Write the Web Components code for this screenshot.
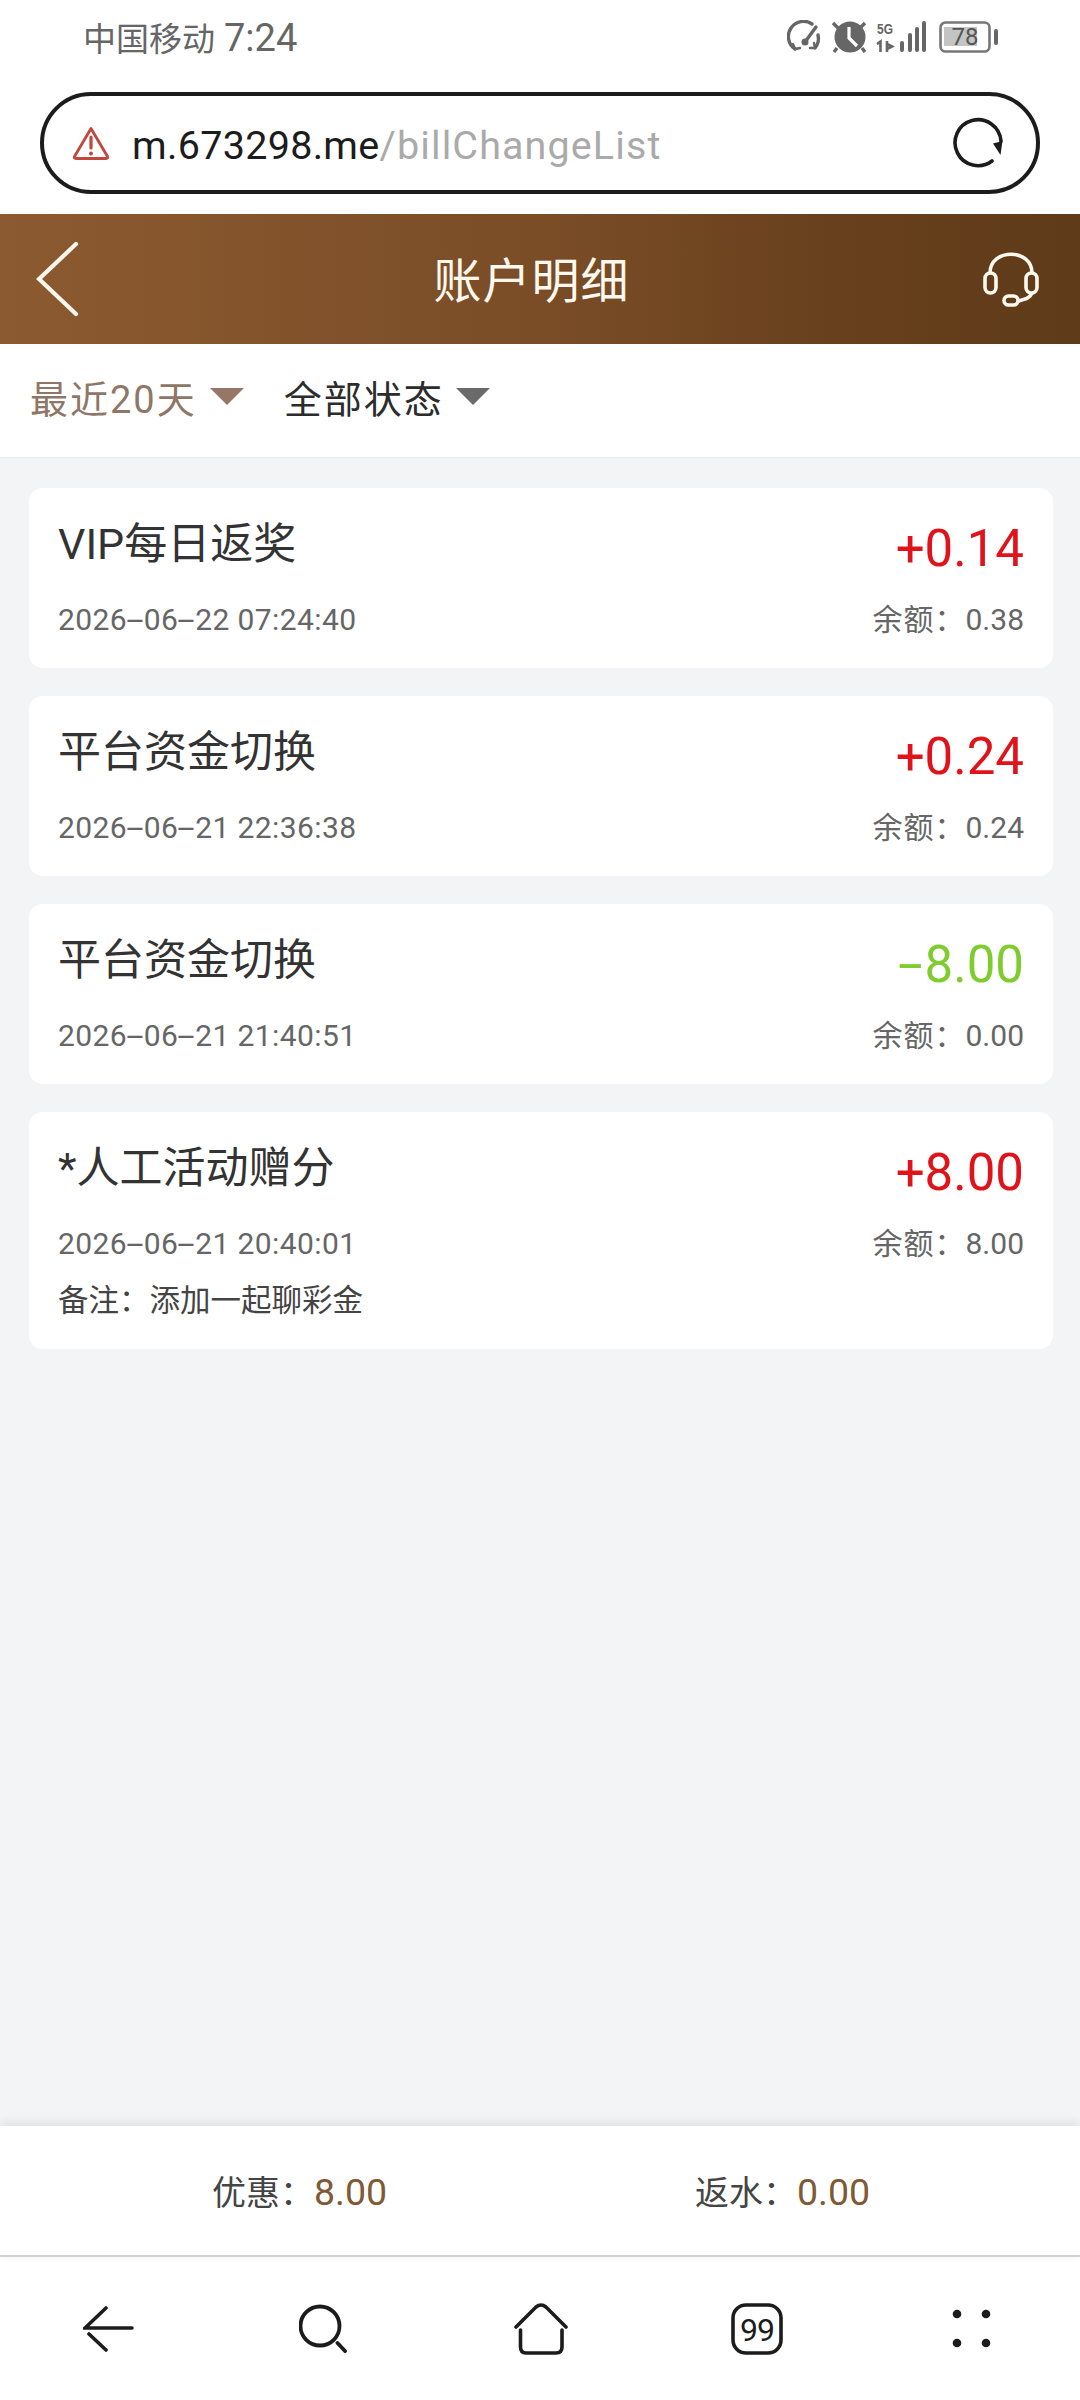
<!DOCTYPE html>
<html lang="zh">
<head>
<meta charset="utf-8">
<title>账户明细</title>
<style>
html, body {
  margin: 0;
  height: 2400px;
  overflow: hidden;
  background: #f3f4f6;
  font-family: Roboto, "Noto Sans CJK SC", sans-serif;
}
#app {
  display: flex;
  flex-direction: column;
  height: 2400px;
}
bill-list {
  flex: 1;
}
</style>
</head>
<body>
<div id="app">
  <status-bar></status-bar>
  <url-bar host="m.673298.me" path="/billChangeList"></url-bar>
  <page-header title="账户明细"></page-header>
  <filter-bar></filter-bar>
  <bill-list>
    <bill-item name="VIP每日返奖" amount="+0.14" date="2026-06-22 07:24:40" balance="0.38"></bill-item>
    <bill-item name="平台资金切换" amount="+0.24" date="2026-06-21 22:36:38" balance="0.24"></bill-item>
    <bill-item name="平台资金切换" amount="-8.00" date="2026-06-21 21:40:51" balance="0.00"></bill-item>
    <bill-item name="*人工活动赠分" amount="+8.00" date="2026-06-21 20:40:01" balance="8.00" note="添加一起聊彩金"></bill-item>
  </bill-list>
  <summary-bar></summary-bar>
  <browser-nav></browser-nav>
</div>
<script>
const font = `Roboto, "Noto Sans CJK SC", sans-serif`;

// le tiret de la police d'origine est bien plus large que celui de Roboto
const wideDash = (text) => text.replace(/-/g, `<span class="dash">-</span>`);

class StatusBar extends HTMLElement {
  constructor() {
    super();
    this.attachShadow({ mode: "open" });
    this.shadowRoot.innerHTML = `
<style>
:host { display: flex; box-sizing: border-box; height: 92px; padding: 0 81px 0 83px; background: #fff; color: #666; justify-content: space-between; font-family: ${font}; }
.left { font-size: 33px; line-height: 44px; margin-top: 16px; white-space: nowrap; }
.left span { font-size: 38px; margin-left: 9px; }
svg { display: block; margin-top: 20px; }
</style>
<div class="left">中国移动<span>7:24</span></div>
<svg width="212" height="34" viewBox="0 0 212 34" fill="none">
  <g stroke="#666" stroke-width="3.400" stroke-linecap="round">
    <path d="M8 29A15 15 0 0 1 25 4"/>
    <path d="M31 15A15 15 0 0 1 28 28"/>
    <path d="M8 29l-2-5M8 29l5-1M28 28l-1-5M28 28l-5 0" stroke-width="2.400"/>
    <path d="M18 22L29 7"/>
    <circle cx="18" cy="22" r="1.800" fill="#666"/>
  </g>
  <circle cx="63" cy="17" r="15.500" fill="#666"/>
  <path d="M62 7V18L70 26" stroke="#fff" stroke-width="3.200"/>
  <path d="M46 3l5 5M78 3l-5 5M50 28l-3 4M75 28l3 4" stroke="#666" stroke-width="3.400"/>
  <text x="90" y="14" font-family="'Liberation Sans',sans-serif" font-size="15" font-weight="700" fill="#666" textLength="16" lengthAdjust="spacingAndGlyphs">5G</text>
  <path d="M90 24l3.500-2.500V32M100 21V32M100 29l5-2.500-5-2.500" stroke="#666" stroke-width="2.600"/>
  <g fill="#666">
    <rect x="113" y="21" width="4" height="11" rx="2"/>
    <rect x="121" y="13" width="4" height="19" rx="2"/>
    <rect x="128" y="7" width="4" height="25" rx="2"/>
    <rect x="135" y="1" width="4" height="31" rx="2"/>
  </g>
  <rect x="153.500" y="2.500" width="49" height="29" rx="5" fill="#fff" stroke="#777" stroke-width="2.600"/>
  <rect x="157" y="7" width="33" height="19" fill="#c4c4c4"/>
  <text x="178" y="25" text-anchor="middle" font-family="Roboto,sans-serif" font-size="24" fill="#555">78</text>
  <rect x="207" y="9" width="4" height="16" rx="2" fill="#666"/>
</svg>`;
  }
}

class UrlBar extends HTMLElement {
  constructor() {
    super();
    this.attachShadow({ mode: "open" });
    this.shadowRoot.innerHTML = `
<style>
:host { display: block; box-sizing: border-box; height: 122px; padding: 0 40px 20px 40px; background: #fff; font-family: ${font}; }
.pill { box-sizing: border-box; height: 102px; border: 4px solid #1c1c1c; border-radius: 51px; display: flex; align-items: center; padding: 0 28px 0 28px; }
.warn { margin-right: 22px; flex: none; }
.url { flex: 1; font-size: 39.500px; letter-spacing: 0.3px; padding-top: 4px; color: #1c1c1c; white-space: nowrap; }
.url span { color: #aaa; letter-spacing: 1.100px; }
.reload { margin-right: 4px; }
</style>
<div class="pill">
  <svg class="warn" width="38" height="36" viewBox="0 0 38 36" fill="none">
    <path d="M19 3.500L2.500 31.500Q1.500 33.500 4 33.500H34Q36.500 33.500 35.500 31.500Z" stroke="#c0473a" stroke-width="2.800" stroke-linejoin="round"/>
    <path d="M19 12v11" stroke="#c0473a" stroke-width="3.200" stroke-linecap="round"/>
    <circle cx="19" cy="28.500" r="2" fill="#c0473a"/>
  </svg>
  <div class="url">${this.getAttribute("host")}<span>${this.getAttribute("path")}</span></div>
  <svg class="reload" width="52" height="52" viewBox="0 0 52 52" fill="none">
    <path d="M40 44A23 23 0 1 1 49 24" stroke="#1c1c1c" stroke-width="3.600" stroke-linecap="round"/>
    <path d="M41 26.500l9.500-2.500-2 14z" fill="#1c1c1c"/>
  </svg>
</div>`;
  }
}

class PageHeader extends HTMLElement {
  constructor() {
    super();
    this.attachShadow({ mode: "open" });
    this.shadowRoot.innerHTML = `
<style>
:host { display: flex; align-items: center; justify-content: space-between; box-sizing: border-box; height: 130px; padding: 0 41px 0 36px; background: linear-gradient(90deg, #8c5a30 0%, #7a4d27 50%, #673f1c 80%, #5f3b1a 100%); color: #fff8ee; font-family: ${font}; }
.title { font-size: 48px; letter-spacing: 1px; margin-bottom: 5px; }
svg { display: block; }
</style>
<svg width="44" height="76" viewBox="0 0 44 76" fill="none"><path d="M40 3L3 38l37 35" stroke="#fff8ee" stroke-width="4.200" stroke-linecap="round"/></svg>
<div class="title">${this.getAttribute("title")}</div>
<svg width="56" height="56" viewBox="0 0 56 56" fill="none" stroke="#fff8ee" stroke-width="3.600">
  <path d="M7 22C7 -3 49 -3 49 22"/>
  <rect x="2" y="22" width="11" height="20" rx="5.500"/>
  <rect x="43" y="22" width="11" height="20" rx="5.500"/>
  <path d="M49 42C47 47 43 48 35 50"/>
  <rect x="21" y="45" width="14" height="9" rx="4.500"/>
</svg>`;
    this.removeAttribute("title");
  }
}

class FilterBar extends HTMLElement {
  constructor() {
    super();
    this.attachShadow({ mode: "open" });
    this.shadowRoot.innerHTML = `
<style>
:host { display: flex; box-sizing: border-box; height: 114px; padding: 0 30px 8px; align-items: center; background: #fff; border-bottom: 1px solid #ececec; font-family: ${font}; font-size: 38px; letter-spacing: 2px; }
.f { display: flex; align-items: center; white-space: nowrap; }
.on { color: #8f7767; margin-right: 40px; }
.off { color: #2c2c2c; }
.tri { width: 0; height: 0; margin-left: 13px; border: 17px solid transparent; border-bottom: 0; }
.on .tri { border-top-color: #967765; }
.off .tri { border-top-color: #6a6a6a; margin-left: 12px; }
</style>
<div class="f on">最近20天<span class="tri"></span></div>
<div class="f off">全部状态<span class="tri"></span></div>`;
  }
}

class BillList extends HTMLElement {
  constructor() {
    super();
    this.attachShadow({ mode: "open" });
    this.shadowRoot.innerHTML = `
<style>
:host { display: flex; flex-direction: column; gap: 28px; box-sizing: border-box; padding: 30px 27px 0 29px; background: #f3f4f6; }
</style>
<slot></slot>`;
  }
}

class BillItem extends HTMLElement {
  constructor() {
    super();
    this.attachShadow({ mode: "open" });
    const amount = this.getAttribute("amount");
    const note = this.getAttribute("note");
    this.shadowRoot.innerHTML = `
<style>
:host { display: block; box-sizing: border-box; padding: 24px 29px 0; height: 180px; background: #fff; border-radius: 14px; font-family: ${font}; }
:host([note]) { height: 237px; }
.row { display: flex; justify-content: space-between; align-items: flex-start; white-space: nowrap; }
.name { font-size: 43px; line-height: 58px; margin-top: 3px; color: #333; }
.amount { font-size: 51px; line-height: 70px; margin-top: 2px; }
.plus { color: #e0121a; }
.minus { color: #7fcc2e; }
.meta { font-size: 30px; line-height: 40px; color: #666; margin-top: 16px; }
.date { letter-spacing: 0.4px; }
.label { letter-spacing: 1px; }
.note { font-size: 30.500px; line-height: 40px; color: #444; margin-top: 17px; }
.dash { display: inline-block; width: 0.56em; text-align: center; transform: scaleX(2.100); }
.amount .dash { transform: scaleX(1.750); }
</style>
<div class="row">
  <div class="name">${this.getAttribute("name")}</div>
  <div class="amount ${amount[0] === "-" ? "minus" : "plus"}">${wideDash(amount)}</div>
</div>
<div class="row meta">
  <div class="date">${wideDash(this.getAttribute("date"))}</div>
  <div><span class="label">余额：</span>${this.getAttribute("balance")}</div>
</div>
${note ? `<div class="note">备注：${note}</div>` : ""}`;
  }
}

class SummaryBar extends HTMLElement {
  constructor() {
    super();
    this.attachShadow({ mode: "open" });
    this.shadowRoot.innerHTML = `
<style>
:host { display: grid; grid-template-columns: 1fr 1fr; box-sizing: border-box; height: 131px; align-items: center; background: #fff; border-bottom: 2px solid #d2d2d2; box-shadow: 0 -3px 10px rgba(0,0,0,0.09); font-family: ${font}; font-size: 34px; color: #444; position: relative; }
.c { white-space: nowrap; }
.a { padding-left: 212px; }
.b { padding-left: 155px; }
b { font-weight: 400; font-size: 37.500px; color: #7f5a35; }
</style>
<div class="c a">优惠：<b>8.00</b></div>
<div class="c b">返水：<b>0.00</b></div>`;
  }
}

class BrowserNav extends HTMLElement {
  constructor() {
    super();
    this.attachShadow({ mode: "open" });
    this.shadowRoot.innerHTML = `
<style>
:host { display: flex; align-items: center; box-sizing: border-box; height: 143px; padding-left: 83px; background: #fff; font-family: ${font}; }
svg { display: block; flex: none; }
.search { margin-left: 165px; }
.home { margin-left: 167px; }
.tabs { margin-left: 163px; }
.more { margin-left: 169px; }
</style>
<svg width="51" height="46" viewBox="0 0 51 46" fill="none" stroke="#1c1c1c" stroke-width="3.600" stroke-linecap="round">
  <path d="M23 2L2 22H49"/>
  <path d="M6 28L23 44"/>
</svg>
<svg class="search" width="48" height="49" viewBox="0 0 48 49" fill="none" stroke="#1c1c1c" stroke-width="3.800" stroke-linecap="round">
  <circle cx="21" cy="22" r="19.500"/>
  <path d="M38.500 39L46 47"/>
</svg>
<svg class="home" width="54" height="52" viewBox="0 0 54 52" fill="none" stroke="#1c1c1c" stroke-width="3.600" stroke-linecap="round">
  <path d="M2 24L22 4Q27 0 32 4L52 24"/>
  <path d="M6.500 27V44Q6.500 50 12 50H42Q48 50 48 44V27"/>
</svg>
<svg class="tabs" width="52" height="52" viewBox="0 0 52 52">
  <rect x="2" y="2" width="48" height="48" rx="13" fill="none" stroke="#1c1c1c" stroke-width="3.600"/>
  <text x="26" y="37.500" text-anchor="middle" letter-spacing="-1" font-family="Roboto,sans-serif" font-size="32" fill="#1c1c1c">99</text>
</svg>
<svg class="more" width="39" height="39" viewBox="0 0 39 39" fill="#1c1c1c">
  <circle cx="5" cy="5" r="4.300"/><circle cx="34" cy="5" r="4.300"/>
  <circle cx="5" cy="34" r="4.300"/><circle cx="34" cy="34" r="4.300"/>
</svg>`;
  }
}

customElements.define("status-bar", StatusBar);
customElements.define("url-bar", UrlBar);
customElements.define("page-header", PageHeader);
customElements.define("filter-bar", FilterBar);
customElements.define("bill-list", BillList);
customElements.define("bill-item", BillItem);
customElements.define("summary-bar", SummaryBar);
customElements.define("browser-nav", BrowserNav);
</script>
</body>
</html>
